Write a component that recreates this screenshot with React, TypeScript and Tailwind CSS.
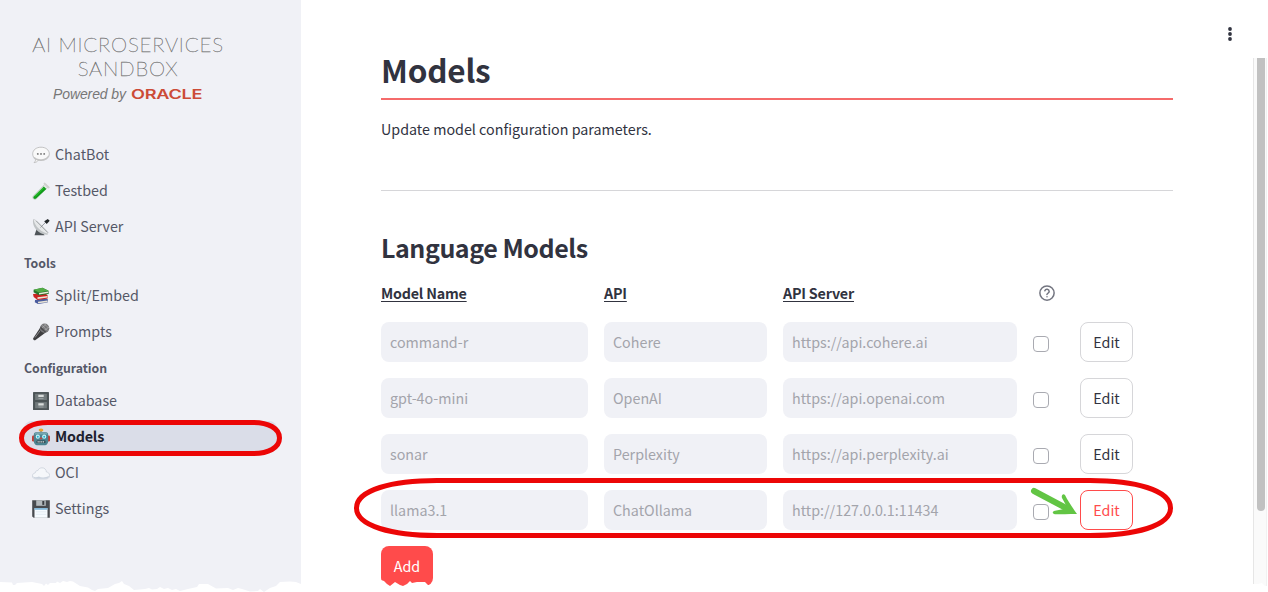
import React from "react";

type IconName = "chat" | "tube" | "dish" | "books" | "mic" | "cabinet" | "robot" | "cloud" | "disk";

function Emoji({ name }: { name: IconName }) {
  return (
    <svg viewBox="0 0 18 18" className="h-[18px] w-[18px] shrink-0">
      {name === "chat" && (
        <>
          <path d="M9 1.2c4.700 0 8.300 2.800 8.300 6.700s-3.600 6.600-8.300 6.600c-1 0-1.800-.1-2.600-.3-1 1.400-2.700 2.400-4.300 2.400 1-.9 1.500-2 1.500-3.300C1.800 12.100.7 10.100.7 7.900.7 4 4.300 1.200 9 1.200z" fill="#f9f9f9" stroke="#b5b5b5" strokeWidth=".8" />
          <path d="M2 11.500c1.500 2 4.500 2.700 8 2.300 3-.3 5.500-1.700 6.700-4" fill="none" stroke="#c4c4c4" strokeWidth="1.300" />
          <g fill="#777"><circle cx="5.800" cy="7.900" r=".95" /><circle cx="9" cy="7.900" r=".95" /><circle cx="12.200" cy="7.900" r=".95" /></g>
        </>
      )}
      {name === "tube" && (
        <>
          <path d="M13.300 1.800l3 3L4.400 16.800c-.9.800-2.200.8-3 0s-.8-2.100 0-2.900z" fill="#e0e9e2" stroke="#a9b5ac" strokeWidth=".5" />
          <path d="M11.800 4.500l2.500 2.500-10.200 9.400c-.7.700-1.700.6-2.300 0s-.6-1.500.1-2.200z" fill="#119c1b" />
          <path d="M11.500 6L3 14.500" stroke="#36cf36" strokeWidth="1" />
          <path d="M12.600 1.600l4 3.800" stroke="#d0d0d0" strokeWidth="2" strokeLinecap="round" />
        </>
      )}
      {name === "dish" && (
        <>
          <path d="M5 10l-2.500 7.300h10L10 11z" fill="#4f5559" />
          <path d="M1.200 1.500C-.3 7.500 5 16.200 14.600 16.700c1.500 0 2-.8 1.200-1.800L3 1.600C2.300.8 1.500.8 1.200 1.500z" fill="#bfc3c5" />
          <path d="M1.700 1.600c3 0 14.800 11 14.500 13.900C11 16 2 8 1.700 1.600z" fill="#e6e8e9" />
          <path d="M4 2.700l12 12M8.500 9.500l6.200-6.300" stroke="#81878b" strokeWidth=".8" />
          <path d="M12.200 3.200l3.600-2.200 1.900 1.700-3 3.300z" fill="#222629" />
        </>
      )}
      {name === "books" && (
        <>
          <path d="M3 13l11-1.500 2 1-.4 3L6 17l-3.200-1.700z" fill="#4a5c9e" />
          <path d="M6 14.800l9.500-1.300v1.700L6 16.300z" fill="#e9e4d6" />
          <path d="M1 7l12-1 2.700 2.400v3.200L5.600 13 1.700 10z" fill="#c9231f" />
          <path d="M5.500 10.300l10-1.300v1.600l-10 1.500z" fill="#eee5d4" />
          <path d="M1.600 2.800L10.500.8l6.100 3v3.100L7 8.300 1.600 5.200z" fill="#24742c" />
          <path d="M1.600 2.800L10.500.8l6.100 3L7 5.400z" fill="#51ab45" />
          <path d="M7 6l9.200-1.500v1.400L7 7.400z" fill="#ebe9d8" />
        </>
      )}
      {name === "mic" && (
        <>
          <path d="M8 5l5 5L3.200 17.200c-.8.500-2.500-.8-2-2z" fill="#3e3e40" />
          <path d="M8.300 7.500L3 14.500" stroke="#8b8b8d" strokeWidth="1" />
          <circle cx="12.600" cy="5.200" r="4.700" fill="#78787a" />
          <path d="M10 2.200l5.300 5.300M12.400.9l4.200 4.200M8.500 4.500l5 5M8.700 6L14 1.500M11 8.500L17 4" stroke="#b5b5b7" strokeWidth=".6" />
          <path d="M8.400 4.400l5.200 5" stroke="#4c4c4e" strokeWidth="1.500" />
        </>
      )}
      {name === "cabinet" && (
        <>
          <rect x="1" width="16" height="18" rx=".6" fill="#50585a" />
          <rect x="2.800" y="1.300" width="12.400" height="7" fill="#727a7c" stroke="#434b4d" strokeWidth=".6" />
          <rect x="2.800" y="9.800" width="12.400" height="7" fill="#727a7c" stroke="#434b4d" strokeWidth=".6" />
          <path d="M6.300 2.800h5.400v2.300H6.300zM6.300 11.200h5.400v2.300H6.300z" fill="#d9dddb" />
          <path d="M6.500 6.600h5M6.500 15h5" stroke="#a5adad" strokeWidth=".8" />
        </>
      )}
      {name === "robot" && (
        <>
          <path d="M9 4V1.500" stroke="#607f8a" strokeWidth="1.500" />
          <ellipse cx="9" cy="1.900" rx="2.400" ry="1.500" fill="#efa52c" />
          <rect y="7.500" width="3" height="6" rx="1.200" fill="#c43e36" /><rect x="15" y="7.500" width="3" height="6" rx="1.200" fill="#c43e36" />
          <path d="M4 4.200h10c1.500 0 2.200 1.100 2.200 2.700v6.200c0 2.700-1.600 4.200-3.200 4.200H5c-1.600 0-3.200-1.500-3.200-4.200V6.900c0-1.600.7-2.700 2.200-2.700z" fill="#4c8390" />
          <path d="M4 4.700h10c1 0 1.500.8 1.500 1.800H2.500c0-1 .5-1.800 1.500-1.800z" fill="#77a7b0" />
          <circle cx="5.800" cy="8.700" r="2.100" fill="#c5f3fa" /><circle cx="12.200" cy="8.700" r="2.100" fill="#c5f3fa" />
          <circle cx="5.800" cy="8.700" r="1" fill="#25b4cd" /><circle cx="12.200" cy="8.700" r="1" fill="#25b4cd" />
          <path d="M9 8.800l1.300 2.400H7.700z" fill="#ce3f35" />
          <rect x="4.500" y="12.500" width="9" height="2.600" rx="1.200" fill="#263e46" />
          <path d="M5.500 13.800h7" stroke="#dce9eb" strokeWidth="1.200" strokeDasharray="1.300 .5" />
        </>
      )}
      {name === "cloud" && (
        <>
          <path d="M4.300 15C1.800 15 .4 13.700.4 11.900c0-1.700 1.200-2.700 2.800-2.900.1-1.700 1.300-2.600 2.700-2.500C6.600 4.700 8.200 3.800 10 3.800c2.500 0 4.300 1.700 4.400 4.200 2 .2 3.200 1.500 3.200 3.400 0 2.200-1.500 3.600-4 3.600z" fill="#f5f7fa" stroke="#c6cdd7" strokeWidth=".7" />
          <path d="M1 12.300c2 1.600 4.500.8 5.800.2 2.700 1.400 7 1.300 10.300-.7-.4 2-1.700 2.900-3.700 2.900H4.200c-1.600 0-2.900-.8-3.200-2.400z" fill="#ccd4df" />
        </>
      )}
      {name === "disk" && (
        <>
          <path d="M.2.200h17.600v17.600H1.700L.2 16.500z" fill="#484b4f" />
          <path d="M4.200.2h9.600v5.600H4.200z" fill="#b3b9bc" />
          <path d="M10.300 1h2v3.900h-2z" fill="#393c40" />
          <path d="M2.500 8.200h13v9.600h-13z" fill="#f6fbff" />
          <path d="M2.500 8h13v1.800h-13z" fill="#85badb" />
          <path d="M3.800 11.800h10.400M3.800 14.300h10.400" stroke="#d0dce6" strokeWidth=".5" />
        </>
      )}
    </svg>
  );
}

function NavItem({ icon, label, active = false }: { icon: IconName; label: string; active?: boolean }) {
  return (
    <a className={`flex h-8 items-center gap-[5px] rounded-lg px-2 ${active ? "bg-[#dadde8] font-bold text-[#1e212f]" : "text-[#555867]"}`}>
      <Emoji name={icon} />
      <span className={`pb-0.5 leading-[30px] ${active ? "tracking-[-0.2px]" : ""}`}>{label}</span>
    </a>
  );
}

function NavHeading({ children }: { children: React.ReactNode }) {
  return <div className="h-[33px] text-[12.300px] font-bold leading-[33px] tracking-[-0.050px] text-[#555867]">{children}</div>;
}

const models = [
  ["command-r", "Cohere", "https://api.cohere.ai"],
  ["gpt-4o-mini", "OpenAI", "https://api.openai.com"],
  ["sonar", "Perplexity", "https://api.perplexity.ai"],
  ["llama3.1", "ChatOllama", "http://127.0.0.1:11434"],
];

export default function App() {
  return (
    <div className="relative flex h-[592px] w-[1268px] overflow-hidden bg-white font-['Noto_Sans_CJK_SC','Noto_Sans',sans-serif] text-[14.300px] text-[#31333f]">
      <aside className="h-full w-[301px] shrink-0 bg-[#f0f1f6] px-6 pt-8">
        <div className="flex h-[107px] w-[208px] flex-col items-center whitespace-nowrap text-[#777]">
          <div className="h-6 font-['Lato',sans-serif] text-[20.500px] font-extralight leading-6 tracking-[0.800px] [-webkit-text-stroke:0.400px_#777]">AI MICROSERVICES</div>
          <div className="h-6 font-['Lato',sans-serif] text-[20.500px] font-extralight leading-6 tracking-[0.800px] [-webkit-text-stroke:0.400px_#777]">SANDBOX</div>
          <div className="flex h-[29px] w-[150px] items-center gap-[5px]">
            <span className="font-['Liberation_Sans',sans-serif] text-[14px] italic tracking-[-0.100px]">Powered by</span>
            <span className="origin-left scale-x-[1.430] font-['Inter',sans-serif] text-[12.700px] font-semibold tracking-[-0.200px] text-[#cc4b37]">ORACLE</span>
          </div>
        </div>
        <nav className="flex flex-col gap-1">
          <NavItem icon="chat" label="ChatBot" />
          <NavItem icon="tube" label="Testbed" />
          <NavItem icon="dish" label="API Server" />
        </nav>
        <div className="pt-1"><NavHeading>Tools</NavHeading></div>
        <nav className="flex flex-col gap-1">
          <NavItem icon="books" label="Split/Embed" />
          <NavItem icon="mic" label="Prompts" />
        </nav>
        <div className="pt-1"><NavHeading>Configuration</NavHeading></div>
        <nav className="flex flex-col gap-1">
          <NavItem icon="cabinet" label="Database" />
          <NavItem icon="robot" label="Models" active />
          <NavItem icon="cloud" label="OCI" />
          <NavItem icon="disk" label="Settings" />
        </nav>
      </aside>

      <main className="ml-20 w-[792px] shrink-0">
        <h1 className="mt-11 h-14 border-b-2 border-[#f56b6b] text-[31.500px] font-bold leading-[50px] tracking-[-0.200px]">Models</h1>
        <p className="mt-[17px] h-6 leading-6">Update model configuration parameters.</p>
        <hr className="mt-[49px] border-[#d6d6d9]" />
        <h2 className="mt-9 h-10 text-[25px] font-bold leading-10 tracking-[-0.450px]">Language Models</h2>
        <div className="mt-3.5 grid h-6 grid-cols-[207px_163px_234px_31px_53px] items-center gap-4 font-bold leading-6 tracking-[-0.200px]">
          <span className="underline underline-offset-2">Model Name</span>
          <span className="underline underline-offset-2">API</span>
          <span className="underline underline-offset-2">API Server</span>
          <svg viewBox="0 0 24 24" className="ml-[5px] h-[18px] w-[18px]" fill="none" stroke="#737580" strokeWidth="2" strokeLinecap="round" strokeLinejoin="round">
            <circle cx="12" cy="12" r="9.500" /><path d="M9.100 9a3 3 0 0 1 5.800 1c0 2-3 2.500-3 4M12 17h.01" />
          </svg>
        </div>
        <div className="mt-[17px] flex flex-col gap-4">
          {models.map((row, i) => (
            <div key={row[0]} className="grid h-10 grid-cols-[207px_163px_234px_31px_53px] items-center gap-4">
              {row.map((value) => (
                <div key={value} className="h-10 rounded-lg bg-[#f0f1f6] px-[9px] leading-10 text-[#a3a4ab]">{value}</div>
              ))}
              <div className="mt-1 h-4 w-4 rounded-[4px] border border-[#a9aab1] bg-white" />
              <button className={`h-10 rounded-lg border bg-white leading-[38px] ${i === 3 ? "border-[#ff4b4b] text-[#ff4b4b]" : "border-[#d6d6d9] text-[#31333f]"}`}>Edit</button>
            </div>
          ))}
        </div>
        <button className="mt-4 h-10 w-[52px] rounded-lg bg-[#ff4b4b] leading-10 text-white">Add</button>
      </main>

      <div className="ml-20 mt-[58px] h-[528px] w-[14px] border-x border-l-[#e6e6e6] border-r-[#f1f1f1] bg-[#fafafa]">
        <div className="ml-[3px] h-[453px] w-2 rounded-b-full bg-[#c1c1c1]" />
      </div>

      <svg className="absolute left-[1224px] top-6 h-5 w-3" viewBox="0 0 12 20" fill="#31333f">
        <circle cx="6" cy="5" r="1.900" /><circle cx="6" cy="10" r="1.900" /><circle cx="6" cy="15" r="1.900" />
      </svg>

      <svg className="absolute inset-0 h-[592px] w-[1268px]" viewBox="0 0 1268 592" fill="none">
        <path fill="#fff" d="M0 582L12 582.500L13 585L15 585L17 583L32 582L42 584L44 586L46 583.500L48 585L50 583L56 583L57 581.500L60 583L63 581L67 582L70 581L73 581.500L80 586L88 587.500L92 590L95 591L98 589L108 588L115 584L119 583L122 581L124 584L129 586L134 590L145 589L149 588L152 589.500L157 589L160 587L164 589L168 588L172 590L176 589L180 591L188 589L197 587L199 584L208 584L216 588.500L228 588L233 590L238 588L242 589L250 591.500L258 591L260 589L264 592L270 588L276 586L280 582L290 581.500L296 582L301 584V592H0z" />
        <path fill="#fff" d="M381 580l3 1 3 3 3 2 5-4 5 3 3 1 4-2 3-3 2 2 5-1h8l3 3 3 0 2-3V592H381zM1253 584h5l4-1 3 3 3 1V592h-15z" />
        <path d="M48 422.500H253C268 422.500 279.500 428 279.500 438S268 453.500 253 453.500H48C33 453.500 21.500 448 21.500 438S33 422.500 48 422.500z" stroke="#ec0606" strokeWidth="5" />
        <path d="M437 480.500H1090C1135 480.500 1170.500 490 1170.500 508S1135 535.500 1090 535.500H437C392 535.500 356.500 526 356.500 508S392 480.500 437 480.500z" stroke="#ec0606" strokeWidth="5" />
        <path d="M1034 491l32 17" stroke="#62c544" strokeWidth="6" strokeLinecap="round" />
        <path d="M1065 495c3 6 7 12 12 19-9 .1-16 .3-22 .3-3-.3-3-3 0-3.600l9-1.700 3-2-5-9c-1-3 1.300-5 3-3z" fill="#62c544" />
      </svg>
    </div>
  );
}
